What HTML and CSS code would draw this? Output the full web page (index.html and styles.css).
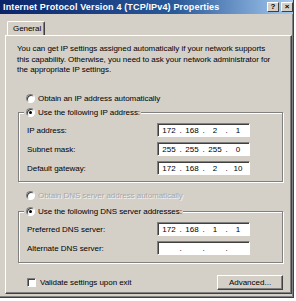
FILE: index.html
```html
<!DOCTYPE html>
<html lang="en">
<head>
  <meta charset="UTF-8" />
  <title>Internet Protocol Version 4 (TCP/IPv4) Properties</title>
  <link rel="stylesheet" href="styles.css">
</head>
<body>
  <div class="window">
    <div class="titlebar">
      <span class="title">Internet Protocol Version 4 (TCP/IPv4) Properties</span>
      <span class="tbtn">?</span>
      <span class="tbtn close">×</span>
    </div>

    <div class="tabs">
      <div class="tab">General</div>
    </div>

    <div class="panel">
      <p class="intro">You can get IP settings assigned automatically if your network supports this capability. Otherwise, you need to ask your network administrator for the appropriate IP settings.</p>

      <div class="option first"><span class="radio"></span>Obtain an IP address automatically</div>

      <fieldset class="group">
        <legend class="option"><span class="radio checked"></span>Use the following IP address:</legend>
        <div class="row">
          <span class="label">IP address:</span>
          <div class="ip"><span class="seg">172</span><span class="dot">.</span><span class="seg">168</span><span class="dot">.</span><span class="seg">2</span><span class="dot">.</span><span class="seg">1</span></div>
        </div>
        <div class="row">
          <span class="label">Subnet mask:</span>
          <div class="ip"><span class="seg">255</span><span class="dot">.</span><span class="seg">255</span><span class="dot">.</span><span class="seg">255</span><span class="dot">.</span><span class="seg">0</span></div>
        </div>
        <div class="row">
          <span class="label">Default gateway:</span>
          <div class="ip"><span class="seg">172</span><span class="dot">.</span><span class="seg">168</span><span class="dot">.</span><span class="seg">2</span><span class="dot">.</span><span class="seg">10</span></div>
        </div>
      </fieldset>

      <div class="option disabled"><span class="radio"></span>Obtain DNS server address automatically</div>

      <fieldset class="group dns">
        <legend class="option"><span class="radio checked"></span>Use the following DNS server addresses:</legend>
        <div class="row">
          <span class="label">Preferred DNS server:</span>
          <div class="ip"><span class="seg">172</span><span class="dot">.</span><span class="seg">168</span><span class="dot">.</span><span class="seg">1</span><span class="dot">.</span><span class="seg">1</span></div>
        </div>
        <div class="row">
          <span class="label">Alternate DNS server:</span>
          <div class="ip"><span class="seg"></span><span class="dot">.</span><span class="seg"></span><span class="dot">.</span><span class="seg"></span><span class="dot">.</span><span class="seg"></span></div>
        </div>
      </fieldset>

      <div class="footer">
        <div class="option check-option"><span class="check"></span>Validate settings upon exit</div>
        <button class="btn">Advanced...</button>
      </div>
    </div>
  </div>
</body>
</html>
```

FILE: styles.css
```css
body {
  margin: 0;
  background: #ffffff;
  font-family: 'Liberation Sans', Arial, sans-serif;
  font-size: 8px;
  letter-spacing: -0.05px;
  color: #000;
}

.window {
  width: 293px;
  height: 297px;
  background: #d4d0c8;
  border-right: 1px solid #404040;
  border-bottom: 1px solid #404040;
  box-shadow: inset -1px -1px 0 #808080;
  overflow: hidden;
}

.titlebar {
  height: 14px;
  display: flex;
  align-items: center;
  padding: 0 0 0 3px;
  background: linear-gradient(to right, #0a246a, #2a5a9a 60%, #a6caf0);
}

.title {
  flex: 1;
  color: #fff;
  font-weight: bold;
  font-size: 9px;
  letter-spacing: 0.15px;
  white-space: nowrap;
}

.tbtn {
  width: 10px;
  height: 8px;
  margin-left: 2px;
  background: #d4d0c8;
  border: 1px solid;
  border-color: #fff #404040 #404040 #fff;
  font-weight: bold;
  font-size: 8px;
  line-height: 8px;
  text-align: center;
  letter-spacing: 0;
}

.tabs {
  padding: 7px 0 0 7px;
  height: 14px;
}

.tab {
  display: inline-block;
  width: 38px;
  height: 14px;
  box-sizing: border-box;
  padding-left: 5px;
  line-height: 13px;
  border: 1px solid;
  border-color: #fff #404040 transparent #fff;
  border-bottom: none;
  border-radius: 2px 2px 0 0;
  box-shadow: inset -1px 0 0 #808080;
  position: relative;
  z-index: 1;
  background: #d4d0c8;
}

.panel {
  margin-left: 5px;
  width: 285px;
  height: 257px;
  border: 1px solid;
  border-color: #fff #404040 #404040 #fff;
  box-shadow: inset -1px -1px 0 #808080;
  padding: 0;
}

.intro {
  margin: 8px 0 0 11px;
  line-height: 10.5px;
  width: 262px;
}

.option {
  display: flex;
  align-items: center;
  height: 12px;
  white-space: nowrap;
}

.option.first {
  margin: 17px 0 0 20px;
}

.option.disabled {
  margin: 8px 0 0 20px;
  color: #a8a8a8;
  text-shadow: 1px 1px 0 #f4f4f4;
}

.radio {
  width: 9px;
  height: 9px;
  box-sizing: border-box;
  border-radius: 50%;
  background: #fff;
  border: 1px solid;
  border-color: #808080 #fff #fff #808080;
  box-shadow: inset 1px 1px 0 #404040;
  margin-right: 3px;
  position: relative;
}

.radio.checked::after {
  content: "";
  position: absolute;
  left: 2px;
  top: 2px;
  width: 3px;
  height: 3px;
  border-radius: 50%;
  background: #000;
}

.group {
  margin: 2px 8px 0 12px;
  padding: 2px 0 3px 0;
  border: 1px solid #808080;
  box-shadow: 1px 1px 0 #fff, inset 1px 1px 0 #fff;
}

.group.dns {
  margin-top: 4px;
  padding-bottom: 4px;
}

.group legend {
  padding: 0 1px 0 2px;
  margin-left: 5px;
  background: #d4d0c8;
}

.row {
  display: flex;
  align-items: center;
  height: 19px;
  padding-left: 8px;
}

.label {
  width: 130px;
}

.ip {
  width: 93px;
  height: 14px;
  box-sizing: border-box;
  display: flex;
  align-items: center;
  padding-left: 2px;
  background: #fff;
  border: 1px solid;
  border-color: #808080 #fff #fff #808080;
  box-shadow: inset 1px 1px 0 #404040;
  letter-spacing: 0;
}

.seg {
  width: 18px;
  text-align: center;
}

.dot {
  width: 5px;
  text-align: center;
}

.footer {
  display: flex;
  align-items: center;
  justify-content: space-between;
  margin: 12px 8px 0 21px;
  height: 16px;
}

.check {
  width: 9px;
  height: 9px;
  box-sizing: border-box;
  background: #fff;
  border: 1px solid;
  border-color: #808080 #fff #fff #808080;
  box-shadow: inset 1px 1px 0 #404040;
  margin-right: 4px;
}

.btn {
  width: 66px;
  height: 15px;
  padding: 0;
  font-family: inherit;
  font-size: 8px;
  letter-spacing: 0;
  background: #d4d0c8;
  color: #000;
  border: 1px solid;
  border-color: #fff #404040 #404040 #fff;
  box-shadow: inset -1px -1px 0 #808080;
  border-radius: 0;
}
```
